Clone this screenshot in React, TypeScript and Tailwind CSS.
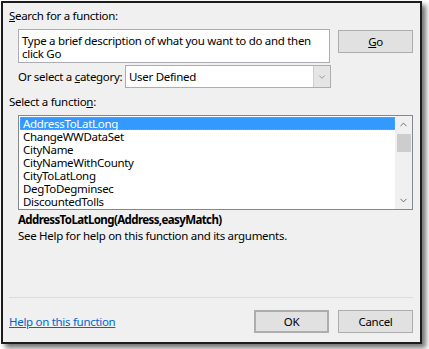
import { ChevronDown, ChevronUp } from 'lucide-react';

const functions = [
  'AddressToLatLong',
  'ChangeWWDataSet',
  'CityName',
  'CityNameWithCounty',
  'CityToLatLong',
  'DegToDegminsec',
  'DiscountedTolls',
];

const btn =
  'flex items-center justify-center bg-[#e1e1e1] border border-[#adadad] text-[#000] w-[75px] h-[23px]';

export default function App() {
  return (
    <div className="w-[429px] h-[349px] bg-white pl-px pt-px font-['Noto_Sans',sans-serif] text-[11.5px] tracking-[-0.3px] text-black whitespace-nowrap">
      <div className="w-[421px] h-[343px] bg-[#f0f0f0] border-2 border-[#1c1c1c] shadow-[4px_4px_5px_rgba(0,0,0,0.55)] flex flex-col pl-[6px] pr-[7px] pb-[9px]">
        {/* Search */}
        <div className="mt-[5px] leading-[16px]">
          <span className="underline">S</span>earch for a function:
        </div>
        <div className="flex mt-[5px] pl-[9px]">
          <div className="w-[313px] h-[34px] bg-white border border-[#abadb3] px-[3px] pt-[4px] leading-[13px] whitespace-normal">
            Type a brief description of what you want to do and then click Go
          </div>
          <div className={`${btn} ml-[8px] mt-px`}>
            <span className="underline">G</span>o
          </div>
        </div>

        {/* Category */}
        <div className="flex items-center mt-[2px] pl-[9px]">
          <span className="w-[107px] leading-[16px]">
            Or select a <span className="underline">c</span>ategory:
          </span>
          <div className="w-[206px] h-[23px] bg-white border border-[#abadb3] flex items-center">
            <span className="flex-1 pl-[3px] leading-[16px]">User Defined</span>
            <div className="w-[17px] h-full bg-[#e5e5e5] border-l border-[#d0d0d0] flex items-center justify-center">
              <ChevronDown size={10} strokeWidth={1.5} className="text-[#707070]" />
            </div>
          </div>
        </div>

        {/* Function list */}
        <div className="mt-[6px] leading-[16px]">
          Select a functio<span className="underline">n</span>:
        </div>
        <div className="ml-[9px] mt-[5px] h-[95px] bg-white border border-[#828790] flex">
          <div className="flex-1 pt-px pl-px">
            {functions.map((fn, i) => (
              <div
                key={fn}
                className={
                  i === 0
                    ? 'h-[13px] leading-[11px] pl-[2px] bg-[#3399ff] text-white border border-dotted border-[#e8892d]'
                    : 'h-[13px] leading-[13px] pl-[3px]'
                }
              >
                {fn}
              </div>
            ))}
          </div>
          <div className="w-[17px] bg-[#f0f0f0] flex flex-col items-center">
            <ChevronUp size={11} strokeWidth={2} className="text-[#606060] mt-[3px]" />
            <div className="w-[14px] h-[18px] bg-[#cdcdcd] mt-[4px]" />
            <div className="flex-1" />
            <ChevronDown size={11} strokeWidth={2} className="text-[#606060] mb-[3px]" />
          </div>
        </div>

        <div className="pl-[9px] mt-[2px] leading-[15px] font-bold tracking-[-0.6px]">
          AddressToLatLong(Address,easyMatch)
        </div>
        <div className="pl-[9px] mt-px leading-[15px]">
          See Help for help on this function and its arguments.
        </div>

        <div className="flex-1" />
        <div className="h-px bg-[#dcdcdc]" />

        <div className="flex items-center mt-[12px]">
          <span className="flex-1 text-[#0066cc] underline leading-[16px]">Help on this function</span>
          <div className={`${btn} border-2 border-[#0078d7]`}>OK</div>
          <div className={`${btn} ml-[9px]`}>Cancel</div>
        </div>
      </div>
    </div>
  );
}
